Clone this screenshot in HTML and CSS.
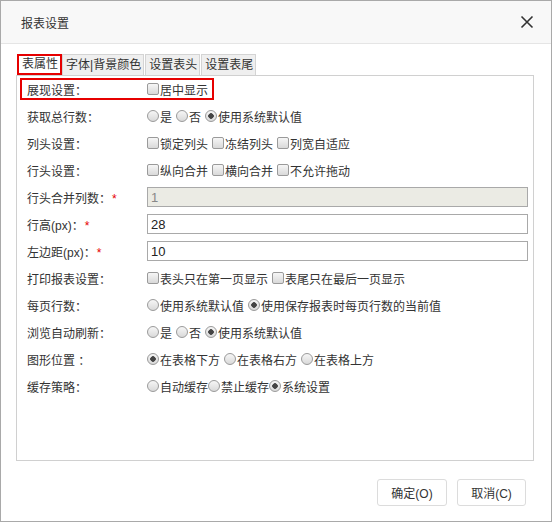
FILE: index.html
```html
<!DOCTYPE html>
<html>
<head>
    <title>报表设置</title>
    <link rel="stylesheet" href="styles.css">
</head>
<body>
    <div class="dialog">
        <div class="dlg-head">
            <span class="dlg-title">报表设置</span>
            <svg class="dlg-close" width="14" height="14" viewBox="0 0 14 14">
                <path d="M1.5 1.5 L12.5 12.5 M12.5 1.5 L1.5 12.5" stroke="#333" stroke-width="1.6" fill="none"/>
            </svg>
        </div>

        <div class="dlg-body">
            <div class="tabs">
                <span class="tab active">表属性</span>
                <span class="tab">字体|背景颜色</span>
                <span class="tab">设置表头</span>
                <span class="tab">设置表尾</span>
            </div>

            <div class="panel">
                <div class="row hl">
                    <span class="lbl">展现设置：</span>
                    <label class="opt"><input type="checkbox">居中显示</label>
                </div>
                <div class="row">
                    <span class="lbl">获取总行数：</span>
                    <label class="opt"><input type="radio" name="zhs">是</label>
                    <label class="opt"><input type="radio" name="zhs">否</label>
                    <label class="opt"><input type="radio" name="zhs" checked>使用系统默认值</label>
                </div>
                <div class="row">
                    <span class="lbl">列头设置：</span>
                    <label class="opt"><input type="checkbox">锁定列头</label>
                    <label class="opt"><input type="checkbox">冻结列头</label>
                    <label class="opt"><input type="checkbox">列宽自适应</label>
                </div>
                <div class="row">
                    <span class="lbl">行头设置：</span>
                    <label class="opt"><input type="checkbox">纵向合并</label>
                    <label class="opt"><input type="checkbox">横向合并</label>
                    <label class="opt"><input type="checkbox">不允许拖动</label>
                </div>
                <div class="row">
                    <span class="lbl">行头合并列数：<em class="req">*</em></span>
                    <input type="text" class="txt" value="1" disabled>
                </div>
                <div class="row">
                    <span class="lbl">行高(px)：<em class="req">*</em></span>
                    <input type="text" class="txt" value="28">
                </div>
                <div class="row">
                    <span class="lbl">左边距(px)：<em class="req">*</em></span>
                    <input type="text" class="txt" value="10">
                </div>
                <div class="row">
                    <span class="lbl">打印报表设置：</span>
                    <label class="opt"><input type="checkbox">表头只在第一页显示</label>
                    <label class="opt"><input type="checkbox">表尾只在最后一页显示</label>
                </div>
                <div class="row">
                    <span class="lbl">每页行数：</span>
                    <label class="opt"><input type="radio" name="myhs">使用系统默认值</label>
                    <label class="opt"><input type="radio" name="myhs" checked>使用保存报表时每页行数的当前值</label>
                </div>
                <div class="row">
                    <span class="lbl">浏览自动刷新：</span>
                    <label class="opt"><input type="radio" name="sx">是</label>
                    <label class="opt"><input type="radio" name="sx">否</label>
                    <label class="opt"><input type="radio" name="sx" checked>使用系统默认值</label>
                </div>
                <div class="row">
                    <span class="lbl">图形位置 ：</span>
                    <label class="opt"><input type="radio" name="tx" checked>在表格下方</label>
                    <label class="opt"><input type="radio" name="tx">在表格右方</label>
                    <label class="opt"><input type="radio" name="tx">在表格上方</label>
                </div>
                <div class="row">
                    <span class="lbl">缓存策略：</span>
                    <label class="opt tight"><input type="radio" name="hc">自动缓存</label>
                    <label class="opt tight"><input type="radio" name="hc">禁止缓存</label>
                    <label class="opt tight"><input type="radio" name="hc" checked>系统设置</label>
                </div>
            </div>
        </div>

        <div class="dlg-foot">
            <button class="btn">确定(O)</button>
            <button class="btn">取消(C)</button>
        </div>
    </div>
</body>
</html>
```

FILE: styles.css
```css
body { margin: 0; font-family: "Liberation Sans", "Noto Sans CJK SC", sans-serif; font-size: 12px; color: #333; }

.dialog { width: 552px; height: 522px; box-sizing: border-box; border: 1px solid #a9a9a9; background: #fff; }

.dlg-head { height: 42px; border-bottom: 1px solid #e5e5e5; background: #f8f8f8; display: flex; align-items: center; justify-content: space-between; padding: 0 17px 0 20px; }
.dlg-title { font-size: 12px; color: #333; }
.dlg-close { display: block; }

.dlg-body { padding: 10px 0 0 15px; }

.tabs { display: flex; padding-left: 1px; height: 21px; }
.tab { height: 20px; line-height: 20px; padding: 0 2px 0 3px; margin-right: 1px; border: 1px solid #d4d4d4; border-bottom: none; background: #efefef; color: #333; }
.tab.active { height: 17px; line-height: 17px; border: 2px solid #e60000; background: #fff; margin-right: 0; }

.panel { width: 518px; height: 386px; box-sizing: border-box; border: 1px solid #d0d0d0; padding: 2px 0 0 3px; }

.row { height: 22px; box-sizing: border-box; border: 2px solid transparent; margin-bottom: 5px; display: flex; align-items: center; white-space: nowrap; }
.row.hl { border-color: #e60000; width: 194px; }

.lbl { width: 125px; flex: none; padding-left: 5px; box-sizing: border-box; }
.req { color: #e60000; font-style: normal; margin-left: 1px; }

.opt { display: flex; align-items: center; margin-right: 4px; }
.opt.tight { margin-right: 0; }

.opt input { appearance: none; -webkit-appearance: none; width: 12px; height: 12px; margin: 0 1px 1px 0; border: 1px solid #9a9a9a; background: linear-gradient(#f6f6f6, #d9d9d9); box-sizing: border-box; }
.opt input[type=checkbox] { border-radius: 2px; }
.opt input[type=radio] { border-radius: 50%; }
.opt input[type=radio]:checked { background: radial-gradient(circle, #444 0, #444 2.5px, transparent 3px), linear-gradient(#f6f6f6, #d9d9d9); }

.txt { width: 381px; height: 20px; box-sizing: border-box; border: 1px solid #a9a9a9; padding: 0 3px; margin: 0; font-family: "Liberation Sans", sans-serif; font-size: 13px; color: #222; background: #fff; }
.txt:disabled { background: #ebebe4; color: #888; }

.dlg-foot { display: flex; justify-content: flex-end; gap: 10px; padding: 18px 25px 0 0; }
.btn { width: 70px; height: 27px; border: 1px solid #dcdcdc; border-radius: 3px; background: #fff; color: #333; font-family: "Liberation Sans", "Noto Sans CJK SC", sans-serif; font-size: 12px; padding: 0; }
.btn + .btn { width: 69px; }
```
